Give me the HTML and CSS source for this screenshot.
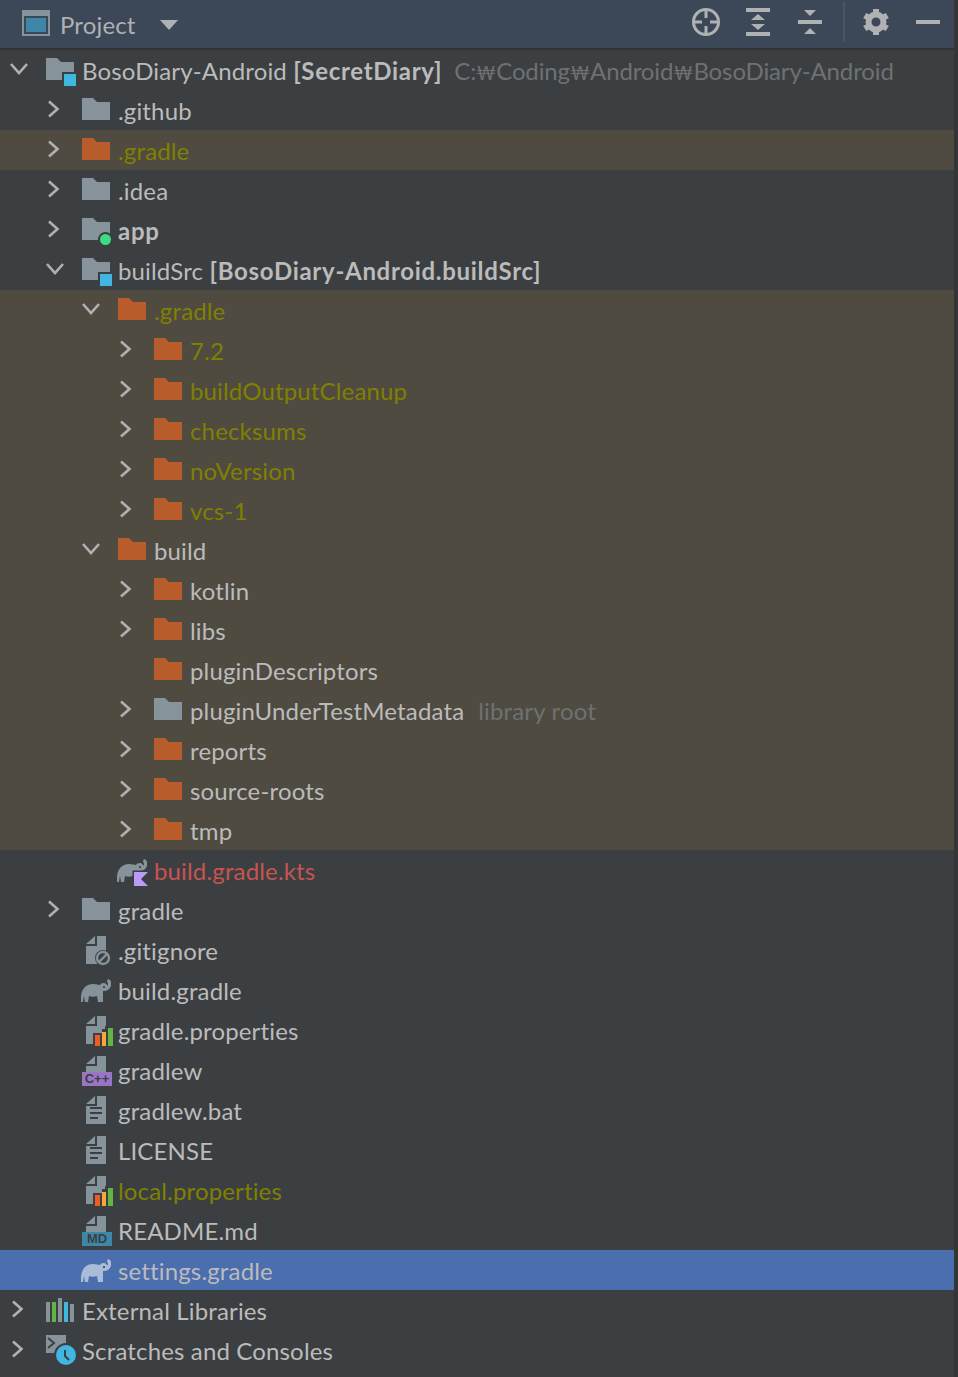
FILE: index.html
```html
<!DOCTYPE html>
<html lang="en">
<head>
<meta charset="utf-8">
<title>Project</title>
<link rel="stylesheet" href="styles.css">
</head>
<body>
<svg class="defs" width="0" height="0">
  <defs>
    <symbol id="right" viewBox="0 0 16 20"><path d="M3 2.500l8.500 7.500-8.500 7.500" fill="none" stroke="currentColor" stroke-width="2.600"/></symbol>
    <symbol id="down" viewBox="0 0 20 16"><path d="M1 3l8 9 8-9" fill="none" stroke="currentColor" stroke-width="2.600"/></symbol>
    <symbol id="folder" viewBox="0 0 28 22"><path d="M0 0h11l4 4h13v18H0z" fill="currentColor"/></symbol>
    <symbol id="elephant" viewBox="0 0 30 23"><path d="M0 23C-1 13 3 5 12 5c3 0 5 1 7 1 1-2 5-3 7 0 1 1 1 0 1-1 0-1-1-2-1-3l1-2c3 1 4 4 3 7-1 3-4 5-7 5h-1v11h-5l-1-6c-3 1-6 1-8 0l-1 6H4l-1-6-1 6z" fill="currentColor"/><circle cx="23" cy="8" r="1.100" fill="#3c3f41"/></symbol>
    <symbol id="file" viewBox="0 0 20 28"><path d="M11 0h9v28H0V10h11zM9 0v8H0z" fill="#87939a" fill-rule="evenodd"/></symbol>
    <symbol id="doc" viewBox="0 0 20 28"><path d="M11 0h9v28H0V10h11zM9 0v8H0z" fill="#87939a" fill-rule="evenodd"/><path d="M4 11h12v2H4zM4 16h12v2H4zM4 21h8v2H4z" fill="#3c3f41"/></symbol>
    <symbol id="bars" viewBox="0 0 21 20"><path d="M0 7h9V3h3V0h9v20H0z" fill="#3c3f41"/><path d="M2 9h5v11H2z" fill="#ee5c25"/><path d="M9 6h4v14H9z" fill="#f2a93b"/><path d="M15 2h5v18h-5z" fill="#62b543"/></symbol>
  </defs>
</svg>
<div class="panel">
  <header class="toolbar">
    <div class="title">
      <svg class="win" width="28" height="26" viewBox="0 0 28 26"><path d="M0 0h28v26H0z" fill="#87939a"/><path d="M2 6h24v18H2z" fill="#3c4858"/><path d="M4 8h20v14H4z" fill="#3d87a8"/></svg>
      <span class="name">Project</span>
      <svg class="caret" width="18" height="10" viewBox="0 0 18 10"><path d="M0 0h18l-9 10z" fill="#afb1b3"/></svg>
    </div>
    <div class="tools">
      <svg class="t-target" width="28" height="28" viewBox="0 0 28 28"><circle cx="14" cy="14" r="12.500" fill="none" stroke="#afb1b3" stroke-width="3"/><path d="M14 1v9M14 18v9M1 14h9M18 14h9" stroke="#afb1b3" stroke-width="3"/></svg>
      <svg class="t-exp" width="24" height="28" viewBox="0 0 24 28"><path d="M0 0h24v4H0zM0 24h24v4H0zM12 6l7 6H5zM12 22l-7-6h14z" fill="#afb1b3"/></svg>
      <svg class="t-col" width="24" height="24" viewBox="0 0 24 24"><path d="M0 10h24v4H0zM6 0h12l-6 6zM12 18l6 6H6z" fill="#afb1b3"/></svg>
      <span class="sep"></span>
      <svg class="t-gear" width="26" height="26" viewBox="0 0 26 26"><g fill="#afb1b3"><path d="M10 0h6v6h-6z"/><path d="M10 0h6v6h-6z" transform="rotate(60 13 13)"/><path d="M10 0h6v6h-6z" transform="rotate(120 13 13)"/><path d="M10 0h6v6h-6z" transform="rotate(180 13 13)"/><path d="M10 0h6v6h-6z" transform="rotate(240 13 13)"/><path d="M10 0h6v6h-6z" transform="rotate(300 13 13)"/></g><circle cx="13" cy="13" r="7.500" fill="none" stroke="#afb1b3" stroke-width="6"/></svg>
      <span class="minus"></span>
    </div>
  </header>
  <ul class="tree">
    <li class="row d0"><svg class="arrow down"><use href="#down"/></svg><svg class="ic folder"><use href="#folder"/></svg><span class="badge sq"></span><span class="label">BosoDiary-Android <b>[SecretDiary]</b></span><span class="hint path">C:<span class="won">₩</span>Coding<span class="won">₩</span>Android<span class="won">₩</span>BosoDiary-Android</span></li>
    <li class="row d1"><svg class="arrow right"><use href="#right"/></svg><svg class="ic folder"><use href="#folder"/></svg><span class="label">.github</span></li>
    <li class="row d1 tint"><svg class="arrow right"><use href="#right"/></svg><svg class="ic folder or"><use href="#folder"/></svg><span class="label ol">.gradle</span></li>
    <li class="row d1"><svg class="arrow right"><use href="#right"/></svg><svg class="ic folder"><use href="#folder"/></svg><span class="label">.idea</span></li>
    <li class="row d1"><svg class="arrow right"><use href="#right"/></svg><svg class="ic folder"><use href="#folder"/></svg><span class="badge dot"></span><span class="label"><b>app</b></span></li>
    <li class="row d1"><svg class="arrow down"><use href="#down"/></svg><svg class="ic folder"><use href="#folder"/></svg><span class="badge sq"></span><span class="label">buildSrc <b>[BosoDiary-Android.buildSrc]</b></span></li>
    <li class="row d2 tint"><svg class="arrow down"><use href="#down"/></svg><svg class="ic folder or"><use href="#folder"/></svg><span class="label ol">.gradle</span></li>
    <li class="row d3 tint"><svg class="arrow right"><use href="#right"/></svg><svg class="ic folder or"><use href="#folder"/></svg><span class="label ol">7.2</span></li>
    <li class="row d3 tint"><svg class="arrow right"><use href="#right"/></svg><svg class="ic folder or"><use href="#folder"/></svg><span class="label ol">buildOutputCleanup</span></li>
    <li class="row d3 tint"><svg class="arrow right"><use href="#right"/></svg><svg class="ic folder or"><use href="#folder"/></svg><span class="label ol">checksums</span></li>
    <li class="row d3 tint"><svg class="arrow right"><use href="#right"/></svg><svg class="ic folder or"><use href="#folder"/></svg><span class="label ol">noVersion</span></li>
    <li class="row d3 tint"><svg class="arrow right"><use href="#right"/></svg><svg class="ic folder or"><use href="#folder"/></svg><span class="label ol">vcs-1</span></li>
    <li class="row d2 tint"><svg class="arrow down"><use href="#down"/></svg><svg class="ic folder or"><use href="#folder"/></svg><span class="label">build</span></li>
    <li class="row d3 tint"><svg class="arrow right"><use href="#right"/></svg><svg class="ic folder or"><use href="#folder"/></svg><span class="label">kotlin</span></li>
    <li class="row d3 tint"><svg class="arrow right"><use href="#right"/></svg><svg class="ic folder or"><use href="#folder"/></svg><span class="label">libs</span></li>
    <li class="row d3 tint"><span class="arrow"></span><svg class="ic folder or"><use href="#folder"/></svg><span class="label">pluginDescriptors</span></li>
    <li class="row d3 tint"><svg class="arrow right"><use href="#right"/></svg><svg class="ic folder"><use href="#folder"/></svg><span class="label">pluginUnderTestMetadata</span><span class="hint root">library root</span></li>
    <li class="row d3 tint"><svg class="arrow right"><use href="#right"/></svg><svg class="ic folder or"><use href="#folder"/></svg><span class="label">reports</span></li>
    <li class="row d3 tint"><svg class="arrow right"><use href="#right"/></svg><svg class="ic folder or"><use href="#folder"/></svg><span class="label">source-roots</span></li>
    <li class="row d3 tint"><svg class="arrow right"><use href="#right"/></svg><svg class="ic folder or"><use href="#folder"/></svg><span class="label">tmp</span></li>
    <li class="row d2"><span class="arrow"></span><svg class="ic ele"><use href="#elephant"/></svg><svg class="kt" width="14" height="14" viewBox="0 0 14 14"><path d="M0 0h14L7 7l7 7H0z" fill="#b99bf8" stroke="#3c3f41" stroke-width="3" paint-order="stroke"/></svg><span class="label red">build.gradle.kts</span></li>
    <li class="row d1"><svg class="arrow right"><use href="#right"/></svg><svg class="ic folder"><use href="#folder"/></svg><span class="label">gradle</span></li>
    <li class="row d1"><span class="arrow"></span><svg class="ic fl"><use href="#file"/></svg><svg class="ban" width="16" height="16" viewBox="0 0 16 16"><circle cx="8" cy="8" r="8" fill="#3c3f41"/><circle cx="8" cy="8" r="6" fill="none" stroke="#87939a" stroke-width="2.400"/><path d="M4 12l8-8" stroke="#87939a" stroke-width="2.400"/></svg><span class="label">.gitignore</span></li>
    <li class="row d1"><span class="arrow"></span><svg class="ic ele"><use href="#elephant"/></svg><span class="label">build.gradle</span></li>
    <li class="row d1"><span class="arrow"></span><svg class="ic fl"><use href="#file"/></svg><svg class="bars" width="21" height="20"><use href="#bars"/></svg><span class="label">gradle.properties</span></li>
    <li class="row d1"><span class="arrow"></span><svg class="ic fl"><use href="#file"/></svg><span class="tag cpp">C++</span><span class="label">gradlew</span></li>
    <li class="row d1"><span class="arrow"></span><svg class="ic fl"><use href="#doc"/></svg><span class="label">gradlew.bat</span></li>
    <li class="row d1"><span class="arrow"></span><svg class="ic fl"><use href="#doc"/></svg><span class="label">LICENSE</span></li>
    <li class="row d1"><span class="arrow"></span><svg class="ic fl"><use href="#file"/></svg><svg class="bars" width="21" height="20"><use href="#bars"/></svg><span class="label ol">local.properties</span></li>
    <li class="row d1"><span class="arrow"></span><svg class="ic fl"><use href="#file"/></svg><span class="tag md">MD</span><span class="label">README.md</span></li>
    <li class="row d1 sel"><span class="arrow"></span><svg class="ic ele"><use href="#elephant"/></svg><span class="label">settings.gradle</span></li>
    <li class="row d0"><svg class="arrow right"><use href="#right"/></svg><svg class="ic lib" viewBox="0 0 28 24"><path d="M0 4h4v20H0z" fill="#87939a"/><path d="M6 4h4v20H6z" fill="#62b543"/><path d="M12 0h4v24h-4z" fill="#87939a"/><path d="M18 4h4v20h-4z" fill="#40b6e0"/><path d="M24 6h4v18h-4z" fill="#87939a"/></svg><span class="label">External Libraries</span></li>
    <li class="row d0"><svg class="arrow right"><use href="#right"/></svg><svg class="ic scr" viewBox="0 0 30 30"><path d="M0 0h20v18H0z" fill="#87939a"/><path d="M2 3l6 5-6 5" fill="none" stroke="#3c3f41" stroke-width="2"/><circle cx="20" cy="20" r="12" fill="#3c3f41"/><circle cx="20" cy="20" r="10" fill="#40b6e0"/><path d="M19 15v6l4 4" fill="none" stroke="#3c3f41" stroke-width="2"/></svg><span class="label">Scratches and Consoles</span></li>
  </ul>
</div>
</body>
</html>
```

FILE: styles.css
```css
* { box-sizing: border-box; }
html, body { margin: 0; padding: 0; }
body {
  width: 958px;
  height: 1377px;
  overflow: hidden;
  background: #333537;
  color: #bbbbbb;
  font-family: Lato, "Noto Sans CJK KR", sans-serif;
  font-size: 24px;
  letter-spacing: 0.15px;
  font-variant-ligatures: none;
}
.defs { position: absolute; }
.panel { display: flex; flex-direction: column; width: 954px; height: 1377px; }
.toolbar {
  height: 50px;
  flex: none;
  background: #3c4858;
  border-bottom: 2px solid #323232;
  display: flex;
  align-items: center;
  justify-content: space-between;
  padding: 0 14px 2px 22px;
}
.title { display: flex; align-items: center; }
.name { margin-left: 10px; color: #afb1b3; line-height: 32px; position: relative; top: 2px; }
.caret { margin-left: 24px; margin-top: 4px; }
.tools { display: flex; align-items: center; margin-bottom: 2px; }
.t-exp { margin-left: 26px; }
.t-col { margin-left: 28px; }
.sep { width: 2px; height: 40px; background: #4a5462; margin-left: 21px; }
.t-gear { margin-left: 18px; }
.minus { width: 24px; height: 4px; background: #afb1b3; margin-left: 27px; }
.tree { list-style: none; margin: 0; padding: 0; background: #3c3f41; flex: 1; }
.row {
  height: 40px;
  display: flex;
  align-items: center;
  position: relative;
  white-space: nowrap;
}
.tint { background: #4f4b41; }
.sel { background: #4b6eaf; }
.d0 { padding-left: 10px; }
.d1 { padding-left: 46px; }
.d2 { padding-left: 82px; }
.d3 { padding-left: 118px; }
.arrow { width: 20px; height: 20px; flex: none; color: #afb1b3; margin-bottom: 2px; }
.arrow.right { width: 16px; }
.arrow.right + .ic { margin-left: 20px; }
.arrow + .ic { margin-left: 16px; }
.ic { width: 28px; height: 22px; flex: none; color: #87939a; margin-bottom: 2px; }
.or { color: #b85c2b; }
.label { margin-left: 8px; line-height: 32px; position: relative; top: 1px; }
.label b { font-weight: 700; letter-spacing: 0.7px; }
.ol { color: #808000; }
.red { color: #c75450; }
.hint { color: #6e7173; }
.path { margin-left: 12px; line-height: 32px; position: relative; top: 2px; letter-spacing: -0.12px; }
.won { font-size: 19px; letter-spacing: 0; }
.root { margin-left: 14px; }
.badge { position: absolute; }
.sq { width: 12px; height: 12px; background: #40b6e0; left: 64px; top: 24px; box-shadow: 0 0 0 2px #3c3f41; }
.d1 .sq { left: 100px; }
.dot { width: 11px; height: 11px; border-radius: 50%; background: #3ddc84; left: 100px; top: 24px; box-shadow: 0 0 0 2px #3c3f41; }
.kt { position: absolute; left: 134px; top: 22px; overflow: visible; }
.ban { position: absolute; left: 95px; top: 20px; }
.bars { position: absolute; left: 93px; top: 16px; }
.arrow + .ele { width: 30px; height: 23px; margin: 1px -1px 0 15px; }
.arrow + .fl { width: 28px; height: 28px; margin-bottom: 0; }
.lib { height: 24px; margin-bottom: 0; }
.scr { width: 30px; height: 30px; margin: 0 -2px 0 20px; }
.tag { position: absolute; left: 82px; top: 22px; width: 30px; height: 14px; font: 700 13px/14px "Liberation Sans", sans-serif; letter-spacing: 0; text-align: center; color: #3c3f41; }
.cpp { background: #9876c4; }
.md { background: #3d87a8; }
.sel .ic { color: #a9bcd8; }
```
